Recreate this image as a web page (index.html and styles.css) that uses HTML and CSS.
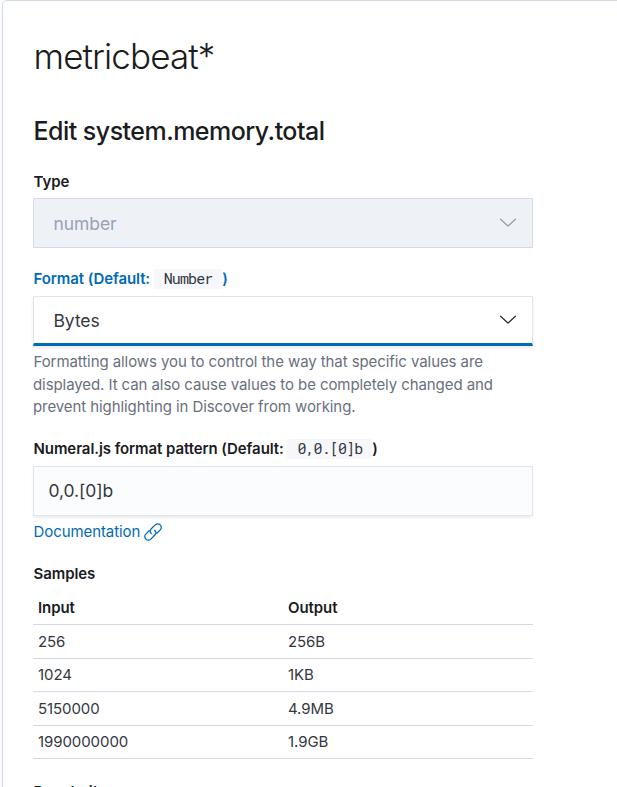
FILE: index.html
```html
<!DOCTYPE html>
<html lang="en">
<head>
<meta charset="utf-8">
<title>Edit system.memory.total</title>
<link rel="stylesheet" href="styles.css">
</head>
<body>
<main class="panel">
  <h1 class="title">metricbeat*</h1>
  <h2 class="subtitle">Edit system.memory.total</h2>
  <section class="row">
    <div class="label type">Type</div>
    <div class="control select disabled"><span>number</span>
      <svg class="chevron" viewBox="0 0 20 20"><path d="M2.6 6.2l6.7 6.3q.7.7 1.4 0l6.7-6.3"/></svg>
    </div>
  </section>
  <section class="row format">
    <div class="label focused">Format (Default: <code>Number</code>)</div>
    <div class="control select active"><span>Bytes</span>
      <svg class="chevron" viewBox="0 0 20 20"><path d="M2.6 6.2l6.7 6.3q.7.7 1.4 0l6.7-6.3"/></svg>
    </div>
    <p class="help">Formatting allows you to control the way that specific values are displayed. It can also cause values to be completely changed and prevent highlighting in Discover from working.</p>
  </section>
  <section class="row pattern">
    <div class="label">Numeral.js format pattern (Default: <code>0,0.[0]b</code>)</div>
    <div class="control field"><span>0,0.[0]b</span></div>
    <a class="link"><span>Documentation</span>
      <svg class="link-icon" viewBox="0 0 20 20"><path d="M8.3 11.7a3.5 3.5 0 0 1 0-4.9l3.9-3.9a3.5 3.5 0 0 1 5 0a3.5 3.5 0 0 1 0 5l-3.3 3.3M11.7 8.3a3.5 3.5 0 0 1 0 4.9l-3.9 3.9a3.5 3.5 0 0 1-5 0a3.5 3.5 0 0 1 0-5l3.3-3.3"/></svg>
    </a>
  </section>
  <section class="row samples-row">
    <div class="label samples">Samples</div>
    <table>
      <thead><tr><th>Input</th><th>Output</th></tr></thead>
      <tbody>
        <tr><td>256</td><td>256B</td></tr>
        <tr><td>1024</td><td>1KB</td></tr>
        <tr><td>5150000</td><td>4.9MB</td></tr>
        <tr><td>1990000000</td><td>1.9GB</td></tr>
      </tbody>
    </table>
  </section>
  <section class="row popularity">
    <div class="label">Popularity</div>
  </section>
</main>
</body>
</html>
```
FILE: styles.css
```css
* { box-sizing: border-box; }
html, body { margin: 0; height: 787px; overflow: hidden; }
body {
  background: #fafbfd;
  color: #343741;
  font-family: Inter, "Liberation Sans", sans-serif;
  font-size: 15px;
  letter-spacing: -0.08px;
  text-indent: 0.5px;
}
.panel {
  margin-left: 2px;
  width: 640px;
  height: 820px;
  padding: 35px 30px 0;
  background: #fff;
  border: 1px solid #d3dae6;
  border-radius: 5px;
}
h1, h2, p { margin: 0; }
.title {
  height: 40px;
  line-height: 40px;
  font-size: 35px;
  font-weight: 300;
  letter-spacing: -0.9px;
  color: #1a1c21;
}
.subtitle {
  margin: 40px 0 25px;
  height: 30px;
  line-height: 30px;
  font-size: 25px;
  font-weight: 500;
  letter-spacing: -0.53px;
  color: #1a1c21;
}
.row { width: 500px; margin-bottom: 20px; }
.row.format { margin-bottom: 19px; }
.row.pattern { margin-bottom: 15px; }
.row.samples-row { margin-bottom: 22px; }
.label {
  height: 22px;
  margin-bottom: 6px;
  line-height: 22px;
  font-weight: 600;
  color: #1a1c21;
  white-space: nowrap;
}
.label.type { margin-bottom: 5px; }
.label.focused { color: #006bb4; }
code {
  display: inline-block;
  height: 20px;
  padding: 0 10px;
  background: #f5f7fa;
  color: #343741;
  font: 400 15px/18px "Roboto Mono", "Liberation Mono", monospace;
  letter-spacing: -0.9px;
  text-indent: 0;
  vertical-align: top;
  margin-top: 1px;
}
.control {
  display: flex;
  align-items: center;
  justify-content: space-between;
  height: 50px;
  font-size: 17.5px;
  border: 1px solid #e0e4ee;
  background: #fbfcfd;
}
.select { padding: 0 14px 0 19px; }
.disabled { background: #eef1f6; border-color: #d3dae6; color: #98a2b3; }
.active {
  background: #fff;
  border-bottom: 3px solid #006bb4;
  box-shadow: 0 2px 3px rgba(60, 70, 90, .12);
}
.field { padding-left: 14px; box-shadow: 0 2px 3px -1px rgba(60, 70, 90, .15); }
.chevron { width: 20px; height: 20px; fill: none; stroke: currentColor; stroke-width: 1.4; stroke-linecap: round; }
.help {
  padding-top: 5px;
  line-height: 22.5px;
  color: #69707d;
  letter-spacing: -0.08px;
}
.link {
  display: flex;
  align-items: center;
  gap: 3px;
  height: 32px;
  color: #006bb4;
}
.link-icon { width: 20px; height: 20px; fill: none; stroke: currentColor; stroke-width: 1.25; stroke-linecap: round; }
.label.samples { margin-bottom: 6px; }
table { width: 100%; border-collapse: collapse; table-layout: fixed; }
th, td {
  height: 34px;
  padding: 0 5px;
  text-align: left;
  border-bottom: 1px solid #d3dae6;
}
tbody tr:nth-child(even) td { height: 33px; }
th { height: 33.5px; font-weight: 600; color: #1a1c21; }
```
